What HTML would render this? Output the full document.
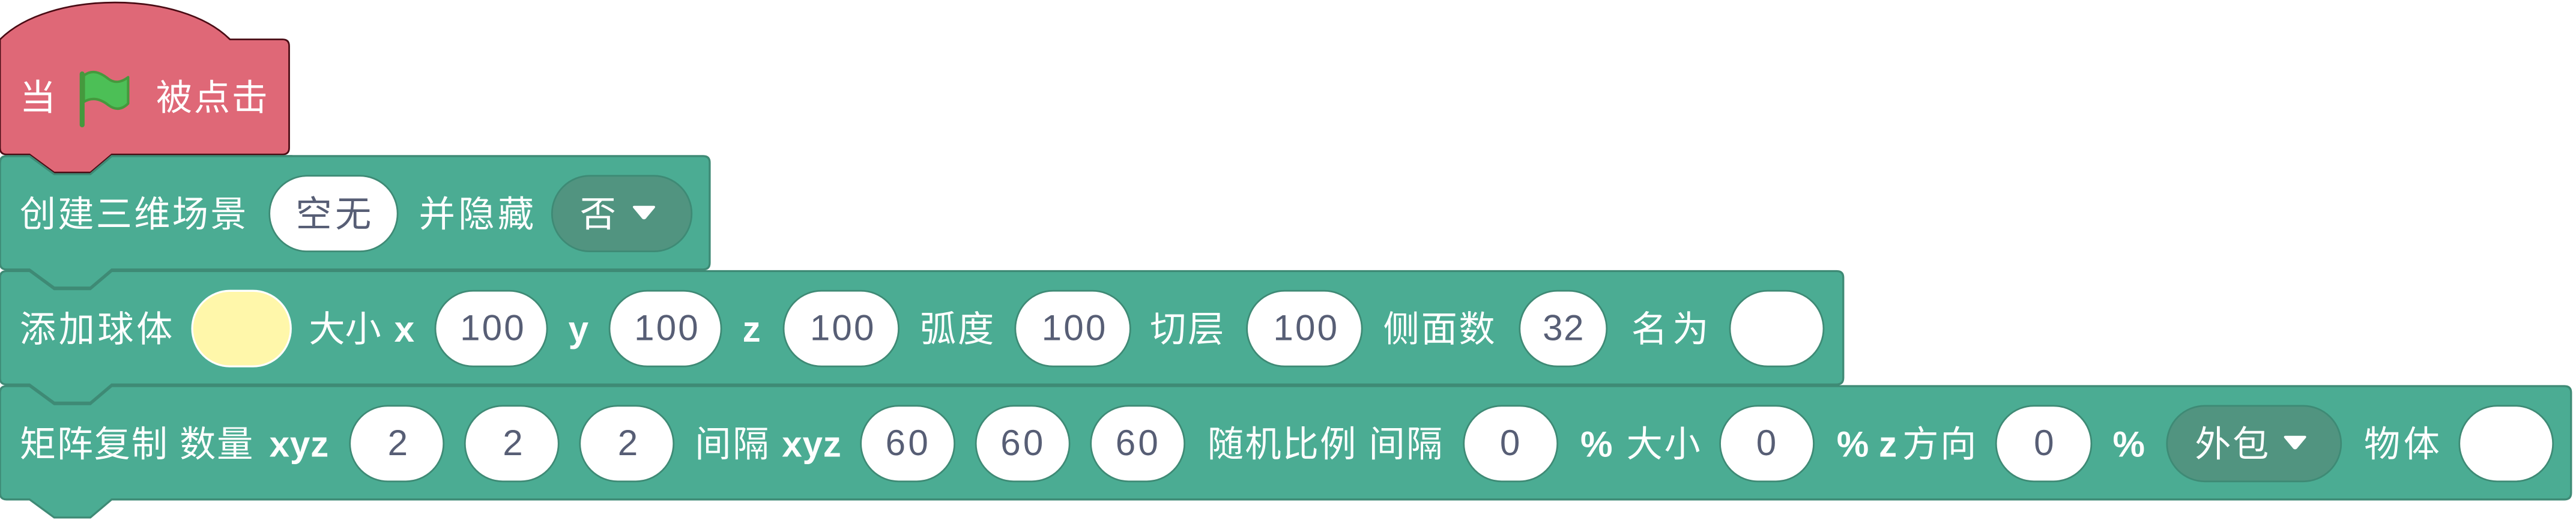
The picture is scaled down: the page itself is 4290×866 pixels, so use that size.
<!DOCTYPE html>
<html><head><meta charset="utf-8"><style>
html,body{margin:0;padding:0;background:#fff;width:4290px;height:866px;overflow:hidden}
svg{display:block}
text{font-family:"Liberation Sans","Noto Sans CJK SC",sans-serif;font-size:22px;fill:#fff}
.n{fill:#575e75;font-size:22px}
.b{font-weight:bold}
</style></head><body>
<svg width="4290" height="866" viewBox="0 0 1568 316.5" preserveAspectRatio="none" xmlns="http://www.w3.org/2000/svg">
<path d="M0,239 Q0,235 4,235 H18 L33,246 H55 L68,235 H1561 Q1565,235 1565,239 V300 Q1565,304 1561,304 H68 L55,315 H33 L18,304 H4 Q0,304 0,300 Z" fill="#4bac93" stroke="#3e8a75" stroke-width="1.2"/>
<path d="M0,169 Q0,165 4,165 H18 L33,176 H55 L68,165 H1118 Q1122,165 1122,169 V230 Q1122,234 1118,234 H68 L55,245 H33 L18,234 H4 Q0,234 0,230 Z" fill="#4bac93" stroke="#3e8a75" stroke-width="1.2"/>
<path d="M0,99 Q0,95 4,95 H18 L33,106 H55 L68,95 H428 Q432,95 432,99 V160 Q432,164 428,164 H68 L55,175 H33 L18,164 H4 Q0,164 0,160 Z" fill="#4bac93" stroke="#3e8a75" stroke-width="1.2"/>
<path d="M0,24 C30,-6 110,-6 140,24 H172 Q176,24 176,28 V90 Q176,94 172,94 H68 L55,105 H33 L18,94 H4 Q0,94 0,90 Z" fill="#df6877" stroke="#4a0b14" stroke-width="1"/>
<path d="M0,99 Q0,95 4,95 H18 L33,106 H55 L68,95 H178" fill="none" stroke="#3e8a75" stroke-width="1.2"/>

<text x="12" y="67" textLength="20">当</text>
<path d="M51,46 C56,42 61,44 66,48 C70,51 74,50 78,47 V63 C74,67 70,67 66,64 C61,60 56,59 51,62 Z" fill="#4cbf56" stroke="#45993d" stroke-width="1.5" stroke-linejoin="round"/>
<line x1="50" y1="45" x2="50" y2="76" stroke="#45993d" stroke-width="3" stroke-linecap="round"/>
<text x="95" y="67" textLength="68">被点击</text>

<text x="12" y="138" textLength="138">创建三维场景</text>
<rect x="164" y="107" width="78" height="46" rx="23" fill="#fff" stroke="#3e8a75"/>
<text class="n" x="180" y="138" textLength="46">空无</text>
<text x="255" y="138" textLength="70">并隐藏</text>
<rect x="336" y="107" width="85" height="46" rx="23" fill="#519480" stroke="#3e8a75"/>
<text x="353" y="138" textLength="22">否</text>
<path d="M386,126 h12 l-5,6 q-1,1.5 -2,0 z" fill="#fff" stroke="#fff" stroke-width="1.5" stroke-linejoin="round"/>

<text x="12" y="208" textLength="93">添加球体</text>
<rect x="117" y="177" width="60" height="46" rx="23" fill="#fff7aa" stroke="#fff" stroke-width="1.2"/>
<text x="188" y="208" textLength="44">大小</text>
<text class="b" x="240" y="208">x</text>
<rect x="265" y="177" width="68" height="46" rx="23" fill="#fff" stroke="#3e8a75"/>
<text class="n" x="280" y="207" textLength="39">100</text>
<text class="b" x="346" y="208">y</text>
<rect x="371" y="177" width="68" height="46" rx="23" fill="#fff" stroke="#3e8a75"/>
<text class="n" x="386" y="207" textLength="39">100</text>
<text class="b" x="452" y="208">z</text>
<rect x="477" y="177" width="70" height="46" rx="23" fill="#fff" stroke="#3e8a75"/>
<text class="n" x="493" y="207" textLength="39">100</text>
<text x="560" y="208" textLength="45">弧度</text>
<rect x="618" y="177" width="70" height="46" rx="23" fill="#fff" stroke="#3e8a75"/>
<text class="n" x="634" y="207" textLength="39">100</text>
<text x="700" y="208" textLength="45">切层</text>
<rect x="759" y="177" width="70" height="46" rx="23" fill="#fff" stroke="#3e8a75"/>
<text class="n" x="775" y="207" textLength="39">100</text>
<text x="842" y="208" textLength="68">侧面数</text>
<rect x="925" y="177" width="53" height="46" rx="23" fill="#fff" stroke="#3e8a75"/>
<text class="n" x="939" y="207" textLength="25">32</text>
<text x="993" y="208" textLength="47">名为</text>
<rect x="1053" y="177" width="57" height="46" rx="23" fill="#fff" stroke="#3e8a75"/>

<text x="12" y="278" textLength="142">矩阵复制 数量</text>
<text class="b" x="164" y="278" textLength="36">xyz</text>
<rect x="213" y="247" width="57" height="46" rx="23" fill="#fff" stroke="#3e8a75"/>
<text class="n" x="236" y="277">2</text>
<rect x="283" y="247" width="57" height="46" rx="23" fill="#fff" stroke="#3e8a75"/>
<text class="n" x="306" y="277">2</text>
<rect x="353" y="247" width="57" height="46" rx="23" fill="#fff" stroke="#3e8a75"/>
<text class="n" x="376" y="277">2</text>
<text x="423" y="278" textLength="45">间隔</text>
<text class="b" x="476" y="278" textLength="36">xyz</text>
<rect x="524" y="247" width="57" height="46" rx="23" fill="#fff" stroke="#3e8a75"/>
<text class="n" x="539" y="277" textLength="26">60</text>
<rect x="594" y="247" width="57" height="46" rx="23" fill="#fff" stroke="#3e8a75"/>
<text class="n" x="609" y="277" textLength="26">60</text>
<rect x="664" y="247" width="57" height="46" rx="23" fill="#fff" stroke="#3e8a75"/>
<text class="n" x="679" y="277" textLength="26">60</text>
<text x="735" y="278" textLength="143">随机比例 间隔</text>
<rect x="891" y="247" width="57" height="46" rx="23" fill="#fff" stroke="#3e8a75"/>
<text class="n" x="913" y="277">0</text>
<text class="b" x="962" y="278">%</text>
<text x="990" y="278" textLength="45">大小</text>
<rect x="1047" y="247" width="57" height="46" rx="23" fill="#fff" stroke="#3e8a75"/>
<text class="n" x="1069" y="277">0</text>
<text class="b" x="1118" y="278">% z</text>
<text x="1158" y="278" textLength="45">方向</text>
<rect x="1215" y="247" width="58" height="46" rx="23" fill="#fff" stroke="#3e8a75"/>
<text class="n" x="1238" y="277">0</text>
<text class="b" x="1286" y="278">%</text>
<rect x="1319" y="247" width="106" height="46" rx="23" fill="#519480" stroke="#3e8a75"/>
<text x="1336" y="278" textLength="45">外包</text>
<path d="M1391,266 h12 l-5,6 q-1,1.5 -2,0 z" fill="#fff" stroke="#fff" stroke-width="1.5" stroke-linejoin="round"/>
<text x="1439" y="278" textLength="46">物体</text>
<rect x="1497" y="247" width="57" height="46" rx="23" fill="#fff" stroke="#3e8a75"/>
</svg>
</body></html>
